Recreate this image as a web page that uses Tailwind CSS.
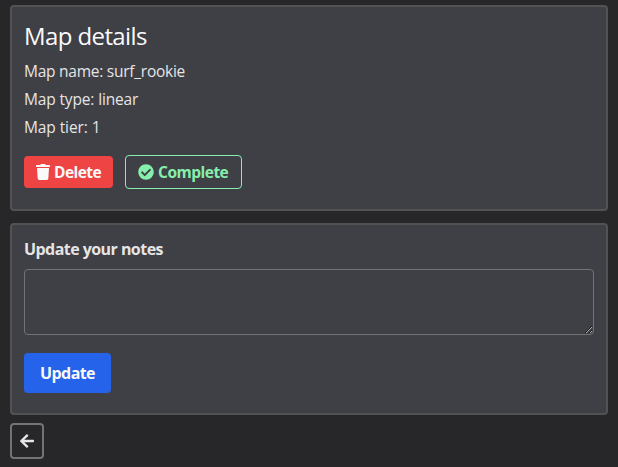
<!DOCTYPE html>
<html lang="en">
<head>
<meta charset="utf-8">
<title>Map details</title>
<script src="https://cdn.jsdelivr.net/npm/@tailwindcss/browser@4"></script>
</head>
<body class="h-[467px] overflow-hidden bg-[#27272a] px-[10px] pt-[5px] font-['Open_Sans','Noto_Sans',sans-serif] text-base text-neutral-200">
<main class="flex flex-col items-start">
  <section class="h-[206px] w-full rounded-[4px] border-2 border-[#525252] bg-[#3f3f46] px-3 pt-[13px]">
    <h1 class="text-2xl leading-8 tracking-[-0.6px] text-neutral-50">Map details</h1>
    <p class="mt-[5px] h-7 text-[15.5px] leading-7 tracking-[-0.25px]">Map name: surf_rookie</p>
    <p class="h-7 text-[15.5px] leading-7 tracking-[-0.15px]">Map type: linear</p>
    <p class="h-7 text-[15.5px] leading-7 tracking-[-0.1px]">Map tier: 1</p>
    <div class="mt-[14px] flex items-center gap-3">
      <button class="flex h-8 w-[89px] items-center gap-1 rounded-[4px] bg-[#ef4444] pl-3 text-[15.5px] font-bold tracking-[-0.55px] text-neutral-50">
        <svg class="h-4 w-[14px] shrink-0" viewBox="0 0 448 512" fill="currentColor"><path d="M432 32H312l-9.400-18.700A24 24 0 0 0 281.100 0H166.800a23.700 23.700 0 0 0-21.400 13.300L136 32H16A16 16 0 0 0 0 48v32a16 16 0 0 0 16 16h416a16 16 0 0 0 16-16V48a16 16 0 0 0-16-16zM53.200 467a48 48 0 0 0 47.900 45h245.800a48 48 0 0 0 47.900-45L416 128H32z"/></svg>
        <span class="pt-0.5">Delete</span>
      </button>
      <button class="flex h-[34px] w-[117px] items-center gap-1 rounded-[4px] border border-[#86efac] pl-3 text-[15.5px] font-bold tracking-[-0.5px] text-[#86efac]">
        <svg class="size-4 shrink-0" viewBox="0 0 512 512" fill="currentColor"><path d="M504 256c0 136.967-111.033 248-248 248S8 392.967 8 256 119.033 8 256 8s248 111.033 248 248zM227.314 387.314l184-184c6.248-6.248 6.248-16.379 0-22.627l-22.627-22.627c-6.248-6.248-16.379-6.249-22.628 0L216 308.118l-70.059-70.059c-6.248-6.248-16.379-6.248-22.628 0l-22.627 22.627c-6.248 6.248-6.248 16.379 0 22.627l104 104c6.249 6.249 16.379 6.249 22.628.001z"/></svg>
        <span class="pt-0.5">Complete</span>
      </button>
    </div>
  </section>

  <section class="mt-3 h-[192px] w-full rounded-[4px] border-2 border-[#525252] bg-[#3f3f46] px-3 pt-3">
    <label for="notes" class="block h-6 font-bold leading-6 tracking-[-0.55px]">Update your notes</label>
    <textarea id="notes" class="mt-2 block h-[66px] w-full resize-y rounded-[4px] border border-[#737373] bg-transparent"></textarea>
    <button class="mt-[18px] h-10 w-[87px] rounded-[4px] bg-[#2563eb] text-center font-bold leading-6 tracking-[-0.6px] text-neutral-50">Update</button>
  </section>

  <button aria-label="Back" class="mt-2 flex h-9 w-[34px] items-center justify-center rounded-[4px] border-2 border-[#737373]">
    <svg class="h-4 w-[14px]" viewBox="0 0 448 512" fill="currentColor"><path d="M257.500 445.100l-22.200 22.200c-9.400 9.400-24.600 9.400-33.900 0L7 273c-9.400-9.400-9.400-24.600 0-33.900L201.400 44.700c9.400-9.400 24.600-9.400 33.900 0l22.200 22.200c9.500 9.500 9.300 25-.4 34.300L136.600 216H424c13.300 0 24 10.700 24 24v32c0 13.300-10.700 24-24 24H136.600l120.500 114.800c9.800 9.300 10 24.800.4 34.300z"/></svg>
  </button>
</main>
</body>
</html>
